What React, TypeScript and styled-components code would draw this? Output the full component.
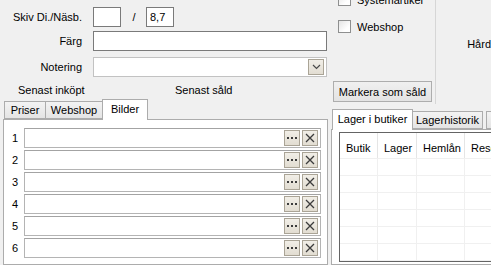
import React from "react"
import styled, { createGlobalStyle } from "styled-components"

const GlobalStyle = createGlobalStyle`
  html, body {
    margin: 0;
    padding: 0;
    background: #f0f0f0;
  }
  body {
    font-family: "Liberation Sans", Arial, sans-serif;
    font-size: 11px;
    color: #000;
  }
`

const Window = styled.div`
  width: 491px;
  height: 265px;
  overflow: hidden;
  display: flex;
  background: #f0f0f0;
`

const LeftColumn = styled.div`
  width: 330px;
  flex-shrink: 0;
  display: flex;
  flex-direction: column;
`

const FormRow = styled.div<{ $top: number }>`
  display: flex;
  align-items: center;
  height: 20px;
  margin-top: ${({ $top }) => $top}px;
`

const Label = styled.div`
  width: 82px;
  margin-right: 11px;
  text-align: right;
  white-space: nowrap;
`

const TextBox = styled.div<{ $width: number; $light?: boolean }>`
  box-sizing: border-box;
  width: ${({ $width }) => $width}px;
  height: 20px;
  background: #fff;
  border: 1px solid ${({ $light }) => ($light ? "#c2c2c2" : "#7a7a7a")};
  display: flex;
  align-items: center;
  padding: 0 2px 0 3px;
`

const Slash = styled.div`
  width: 24px;
  margin-left: 1px;
  text-align: center;
`

const ComboFill = styled.div`
  flex: 1;
`

const SmallButton = styled.div`
  box-sizing: border-box;
  width: 16px;
  height: 16px;
  background: linear-gradient(#f1eee7, #e2ddd2);
  border: 1px solid #aaa496;
  display: flex;
  align-items: center;
  justify-content: center;
  flex-shrink: 0;

  svg {
    display: block;
  }
`

const InfoRow = styled.div`
  display: flex;
  margin-top: 7px;
  height: 12px;
  line-height: 12px;
  padding-left: 18px;
`

const InfoLabel = styled.div<{ $width?: number }>`
  width: ${({ $width }) => ($width ? `${$width}px` : "auto")};
  white-space: nowrap;
`

const TabStrip = styled.div<{ $top: number; $left: number }>`
  display: flex;
  align-items: flex-end;
  height: 20px;
  margin-top: ${({ $top }) => $top}px;
  padding-left: ${({ $left }) => $left}px;
  position: relative;
  z-index: 1;
`

const Tab = styled.div<{ $active?: boolean; $width: number; $gap?: number }>`
  box-sizing: border-box;
  width: ${({ $width }) => $width}px;
  height: ${({ $active }) => ($active ? 21 : 18)}px;
  margin-bottom: ${({ $active }) => ($active ? -1 : 0)}px;
  margin-left: ${({ $gap }) => ($gap ?? -1)}px;
  border: 1px solid #acacac;
  border-bottom: ${({ $active }) => ($active ? "none" : "1px solid #acacac")};
  background: ${({ $active }) =>
    $active ? "#fff" : "linear-gradient(#f3f3f3, #e4e4e4)"};
  display: flex;
  justify-content: center;
  padding-top: ${({ $active }) => ($active ? 3 : 2)}px;
  white-space: nowrap;
  flex-shrink: 0;
`

const LeftPanel = styled.div`
  box-sizing: border-box;
  margin-left: 3px;
  width: 325px;
  flex: 1;
  border: 1px solid #acacac;
  background: #fff;
  padding-top: 8px;
  display: flex;
  flex-direction: column;
  gap: 2px;
`

const ImageRow = styled.div`
  display: flex;
  align-items: center;
  height: 20px;
`

const RowNumber = styled.div`
  width: 20px;
  padding-left: 8px;
  box-sizing: border-box;
`

const PathBox = styled.div`
  box-sizing: border-box;
  width: 297px;
  height: 20px;
  background: #fff;
  border: 1px solid #b4b4b4;
  border-top-color: #a3a3a3;
  display: flex;
  align-items: center;
  justify-content: flex-end;
  gap: 2px;
  padding-right: 2px;
`

const RightColumn = styled.div`
  flex: 1;
  display: flex;
  flex-direction: column;
  min-width: 0;
`

const TopRight = styled.div`
  display: flex;
  height: 104px;
`

const OptionsColumn = styled.div`
  width: 106px;
  padding-left: 3px;
  box-sizing: border-box;
  display: flex;
  flex-direction: column;
`

const CheckRow = styled.div<{ $top: number }>`
  display: flex;
  align-items: center;
  gap: 6px;
  padding-left: 5px;
  height: 13px;
  margin-top: ${({ $top }) => $top}px;
  white-space: nowrap;
`

const CheckBox = styled.div`
  box-sizing: border-box;
  width: 13px;
  height: 13px;
  border: 1px solid #8e8f8f;
  background: linear-gradient(135deg, #e4e4e4, #fff 70%);
  flex-shrink: 0;
`

const PushButton = styled.div`
  box-sizing: border-box;
  width: 99px;
  height: 21px;
  margin-top: 48px;
  border: 1px solid #adadad;
  background: linear-gradient(#f0f0f0, #e3e3e3);
  display: flex;
  align-items: center;
  justify-content: center;
  white-space: nowrap;
`

const SidePanel = styled.div`
  flex: 1;
  border-left: 1px solid #d6d6d6;
  padding: 38px 0 0 31px;
  white-space: nowrap;
  line-height: 12px;
`

const RightPanel = styled.div`
  box-sizing: border-box;
  margin-left: 1px;
  width: 180px;
  flex: 1;
  border: 1px solid #acacac;
  background: #fff;
  padding: 2px 0 0 7px;
`

const Grid = styled.div`
  box-sizing: border-box;
  width: 200px;
  height: 130px;
  border: 1px solid #646464;
  background: #fff;
`

const GridRow = styled.div<{ $header?: boolean }>`
  display: flex;
  height: ${({ $header }) => ($header ? 25 : 16)}px;
  border-bottom: 1px solid #f0f0f0;
`

const Cell = styled.div<{ $width?: number; $header?: boolean }>`
  box-sizing: border-box;
  width: ${({ $width }) => ($width ? `${$width}px` : "auto")};
  flex: ${({ $width }) => ($width ? "none" : 1)};
  border-right: 1px solid ${({ $header }) => ($header ? "#e5e5e5" : "#f0f0f0")};
  padding: ${({ $header }) => ($header ? "9px 0 0 6px" : "0")};
  white-space: nowrap;
`

const Dots = () => (
  <svg width="10" height="3" viewBox="0 0 10 3">
    <rect x="0" y="0" width="2" height="2" fill="#3c3c3c" />
    <rect x="4" y="0" width="2" height="2" fill="#3c3c3c" />
    <rect x="8" y="0" width="2" height="2" fill="#3c3c3c" />
  </svg>
)

const Cross = () => (
  <svg width="10" height="10" viewBox="0 0 10 10">
    <path d="M1 1 L9 9 M9 1 L1 9" stroke="#3c3c3c" strokeWidth="1.3" fill="none" />
  </svg>
)

const Chevron = () => (
  <svg width="9" height="6" viewBox="0 0 9 6">
    <path d="M1 1 L4.5 4.5 L8 1" stroke="#4a4a4a" strokeWidth="1.2" fill="none" />
  </svg>
)

const columns = [
  { title: "Butik", width: 38 },
  { title: "Lager", width: 39 },
  { title: "Hemlån", width: 48 },
  { title: "Rese", width: 0 },
]

const App: React.FC = () => {
  return (
    <>
      <GlobalStyle />
      <Window>
        <LeftColumn>
          <FormRow $top={7}>
            <Label>Skiv Di./Näsb.</Label>
            <TextBox $width={28} />
            <Slash>/</Slash>
            <TextBox $width={28}>8,7</TextBox>
          </FormRow>
          <FormRow $top={4}>
            <Label>Färg</Label>
            <TextBox $width={234} />
          </FormRow>
          <FormRow $top={6}>
            <Label>Notering</Label>
            <TextBox $width={234} $light>
              <ComboFill />
              <SmallButton>
                <Chevron />
              </SmallButton>
            </TextBox>
          </FormRow>
          <InfoRow>
            <InfoLabel $width={157}>Senast inköpt</InfoLabel>
            <InfoLabel>Senast såld</InfoLabel>
          </InfoRow>
          <TabStrip $top={3} $left={5}>
            <Tab $width={42}>Priser</Tab>
            <Tab $width={58}>Webshop</Tab>
            <Tab $width={46} $active>
              Bilder
            </Tab>
          </TabStrip>
          <LeftPanel>
            {[1, 2, 3, 4, 5, 6].map((n) => (
              <ImageRow key={n}>
                <RowNumber>{n}</RowNumber>
                <PathBox>
                  <SmallButton>
                    <Dots />
                  </SmallButton>
                  <SmallButton>
                    <Cross />
                  </SmallButton>
                </PathBox>
              </ImageRow>
            ))}
          </LeftPanel>
        </LeftColumn>
        <RightColumn>
          <TopRight>
            <OptionsColumn>
              <CheckRow $top={-7}>
                <CheckBox />
                Systemartikel
              </CheckRow>
              <CheckRow $top={14}>
                <CheckBox />
                Webshop
              </CheckRow>
              <PushButton>Markera som såld</PushButton>
            </OptionsColumn>
            <SidePanel>Hård</SidePanel>
          </TopRight>
          <TabStrip $top={5} $left={3}>
            <Tab $width={81} $active>
              Lager i butiker
            </Tab>
            <Tab $width={71}>Lagerhistorik</Tab>
            <Tab $width={40} $gap={3} />
          </TabStrip>
          <RightPanel>
            <Grid>
              <GridRow $header>
                {columns.map((c) => (
                  <Cell key={c.title} $width={c.width || undefined} $header>
                    {c.title}
                  </Cell>
                ))}
              </GridRow>
              {[0, 1, 2, 3, 4, 5].map((r) => (
                <GridRow key={r}>
                  {columns.map((c) => (
                    <Cell key={c.title} $width={c.width || undefined} />
                  ))}
                </GridRow>
              ))}
            </Grid>
          </RightPanel>
        </RightColumn>
      </Window>
    </>
  )
}

export default App
